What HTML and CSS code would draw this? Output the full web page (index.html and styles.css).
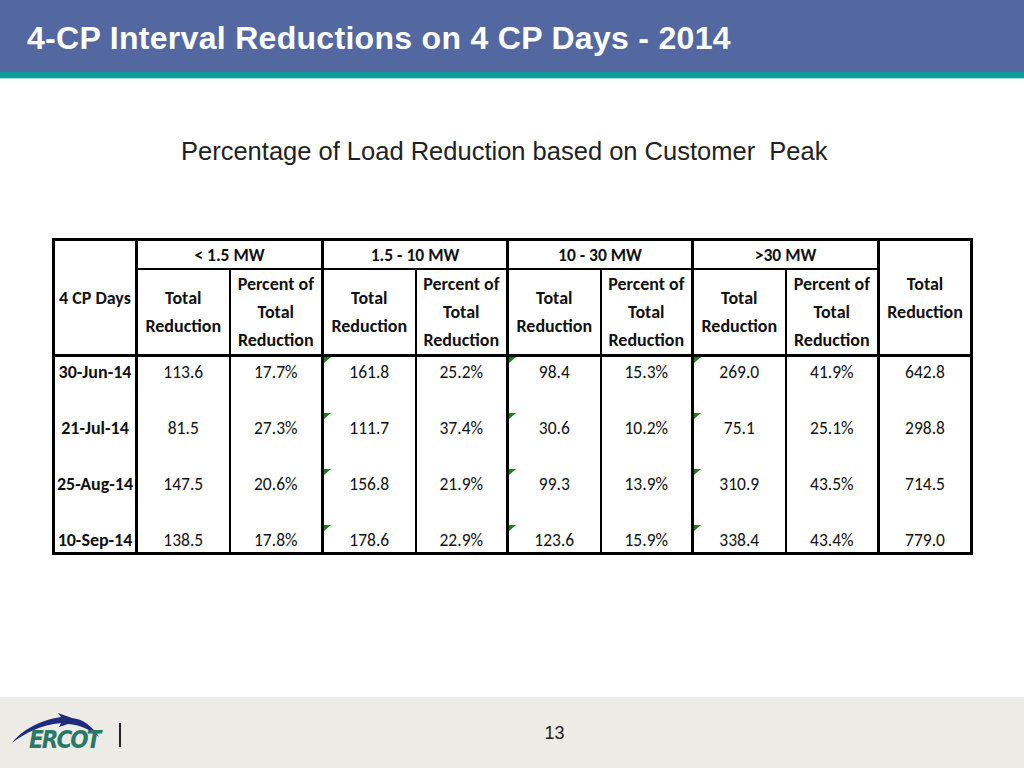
FILE: index.html
```html
<!DOCTYPE html>
<html>
<head>
<meta charset="utf-8">
<title>4-CP Interval Reductions on 4 CP Days - 2014</title>
<link rel="stylesheet" href="styles.css">
</head>
<body>
<div class="page">
  <header class="header">
    <h1 class="title">4-CP Interval Reductions on 4 CP Days - 2014</h1>
  </header>
  <div class="teal"></div>
  <main class="content">
    <p class="subtitle">Percentage of Load Reduction based on Customer&nbsp; Peak</p>
    <table class="data">
      <colgroup>
        <col class="c-date">
        <col class="c-n"><col class="c-n">
        <col class="c-n"><col class="c-m">
        <col class="c-n"><col class="c-m">
        <col class="c-n"><col class="c-n">
        <col class="c-n">
      </colgroup>
      <thead>
        <tr class="grp">
          <th rowspan="2" class="day-h thick-r">4 CP Days</th>
          <th colspan="2" class="thick-r">&lt; 1.5 MW</th>
          <th colspan="2" class="thick-r">1.5 - 10 MW</th>
          <th colspan="2" class="thick-r">10 - 30 MW</th>
          <th colspan="2" class="thick-r">&gt;30 MW</th>
          <th rowspan="2" class="tot-h">Total<br>Reduction</th>
        </tr>
        <tr class="sub">
          <th>Total<br>Reduction</th>
          <th class="thick-r">Percent of<br>Total<br>Reduction</th>
          <th>Total<br>Reduction</th>
          <th class="thick-r">Percent of<br>Total<br>Reduction</th>
          <th>Total<br>Reduction</th>
          <th class="thick-r">Percent of<br>Total<br>Reduction</th>
          <th>Total<br>Reduction</th>
          <th class="thick-r">Percent of<br>Total<br>Reduction</th>
        </tr>
      </thead>
      <tbody>
        <tr class="r">
          <th class="day thick-r">30-Jun-14</th>
          <td>113.6</td><td class="thick-r">17.7%</td>
          <td class="flag">161.8</td><td class="thick-r">25.2%</td>
          <td class="flag">98.4</td><td class="thick-r">15.3%</td>
          <td class="flag">269.0</td><td class="thick-r">41.9%</td>
          <td>642.8</td>
        </tr>
        <tr class="r">
          <th class="day thick-r">21-Jul-14</th>
          <td>81.5</td><td class="thick-r">27.3%</td>
          <td class="flag">111.7</td><td class="thick-r">37.4%</td>
          <td class="flag">30.6</td><td class="thick-r">10.2%</td>
          <td class="flag">75.1</td><td class="thick-r">25.1%</td>
          <td>298.8</td>
        </tr>
        <tr class="r">
          <th class="day thick-r">25-Aug-14</th>
          <td>147.5</td><td class="thick-r">20.6%</td>
          <td class="flag">156.8</td><td class="thick-r">21.9%</td>
          <td class="flag">99.3</td><td class="thick-r">13.9%</td>
          <td class="flag">310.9</td><td class="thick-r">43.5%</td>
          <td>714.5</td>
        </tr>
        <tr class="r last">
          <th class="day thick-r">10-Sep-14</th>
          <td>138.5</td><td class="thick-r">17.8%</td>
          <td class="flag">178.6</td><td class="thick-r">22.9%</td>
          <td class="flag">123.6</td><td class="thick-r">15.9%</td>
          <td class="flag">338.4</td><td class="thick-r">43.4%</td>
          <td>779.0</td>
        </tr>
      </tbody>
    </table>
  </main>
  <footer class="footer">
    <div class="logo">
      <svg class="swoosh" width="90" height="32" viewBox="0 0 90 32" aria-hidden="true">
        <path d="M1 31 C 10 19 28 8 50 5 L 47 1 L 61 6 C 72 7 81 14 88 25 C 79 17 69 13 57 12 L 48 15 L 50 11 C 30 13 14 21 1 31 Z" fill="#1f2b7b"/>
      </svg>
      <span class="logo-text">ERCOT</span>
    </div>
    <div class="divider"></div>
    <div class="pageno">13</div>
  </footer>
</div>
</body>
</html>
```
FILE: styles.css
```css
html, body {
  margin: 0;
  padding: 0;
  background: #ffffff;
}
.page {
  width: 1024px;
  height: 768px;
  display: flex;
  flex-direction: column;
  overflow: hidden;
}
.header {
  height: 72px;
  background: #5368a1;
  display: flex;
  align-items: center;
  padding-left: 27px;
}
.title {
  margin: 0;
  color: #ffffff;
  font-family: "Liberation Sans", Arial, sans-serif;
  font-weight: bold;
  font-size: 32px;
  letter-spacing: 0.3px;
  line-height: 36px;
  padding-top: 4px;
}
.teal {
  height: 6px;
  background: #0f9a9a;
  border-bottom: 1px solid #a8dedb;
}
.content {
  display: flex;
  flex-direction: column;
  align-items: flex-start;
}
.subtitle {
  margin: 57px 0 0 181px;
  font-family: "Liberation Sans", Arial, sans-serif;
  font-size: 25.5px;
  line-height: 30px;
  color: #222222;
}
.data {
  margin: 72px 0 0 52px;
  width: 917px;
  table-layout: fixed;
  border-collapse: collapse;
  border: 3px solid #000;
  font-family: Carlito, Lato, "Open Sans", sans-serif;
  color: #111;
}
.c-date { width: 83px; }
.c-n { width: 93px; }
.c-m { width: 92px; }
.data th, .data td {
  border-right: 2px solid #000;
  padding: 0;
  text-align: center;
}
.data .thick-r { border-right: 3px solid #000; }
.grp th {
  font-size: 17.5px;
  font-weight: bold;
  height: 27px;
  line-height: 20px;
  border-bottom: 2px solid #000;
  vertical-align: middle;
}
.grp th.day-h, .grp th.tot-h {
  border-bottom: 3px solid #000;
  line-height: 28px;
}
.sub th {
  font-size: 18px;
  font-weight: bold;
  line-height: 28px;
  height: 84px;
  border-bottom: 3px solid #000;
  vertical-align: middle;
}
.grp th.tot-h, .grp th.day-h { font-size: 18px; }
.data tbody td, .data tbody th {
  font-size: 17.5px;
  line-height: 22px;
  vertical-align: top;
  padding-top: 4px;
  height: 52px;
}
.data tbody th.day { font-weight: bold; font-size: 18px; }
.data tbody td { font-weight: normal; }
.r.last td, .r.last th { height: 23px; }
.flag { position: relative; }
.flag::before {
  content: "";
  position: absolute;
  left: 0;
  top: 0;
  width: 0;
  height: 0;
  border-top: 6px solid #1a7d1a;
  border-right: 7px solid transparent;
}
.footer {
  margin-top: auto;
  height: 71px;
  background: #ecebe5;
  display: flex;
  align-items: center;
}
.logo {
  width: 90px;
  margin-left: 11px;
  display: flex;
  flex-direction: column;
  align-items: flex-start;
  margin-top: 0;
}
.swoosh { display: block; }
.logo-text {
  margin: -17px 0 0 18px;
  font-family: "DejaVu Sans Condensed", "DejaVu Sans", sans-serif;
  font-weight: bold;
  font-style: italic;
  font-size: 24px;
  line-height: 26px;
  letter-spacing: -2px;
  color: #2a7868;
}
.divider {
  width: 1.5px;
  height: 24px;
  background: #222;
  margin-left: 18px;
  margin-top: 4px;
}
.pageno {
  margin-left: 424px;
  margin-top: 2px;
  font-family: "Liberation Sans", Arial, sans-serif;
  font-size: 18px;
  color: #222;
}
```
